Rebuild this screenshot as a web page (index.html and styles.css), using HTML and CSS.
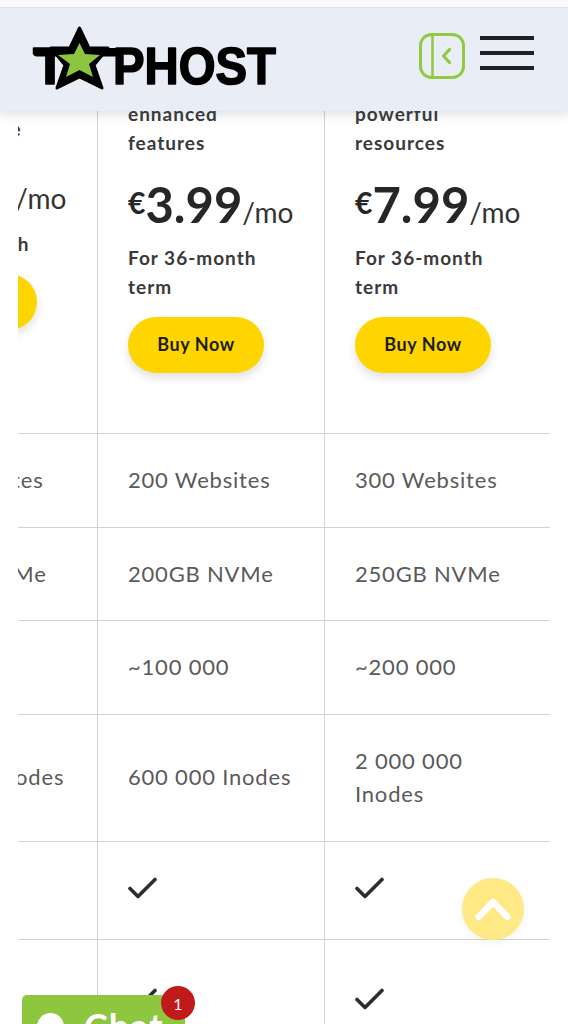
FILE: index.html
```html
<!DOCTYPE html>
<html lang="en">
<head>
<meta charset="utf-8">
<title>TopHost plans</title>
<link rel="stylesheet" href="styles.css">
</head>
<body>
<header class="topbar">
  <div class="bar">
    <svg class="logo" viewBox="0 0 250 70" width="250" height="70" aria-label="TopHost">
      <text class="logo-text" x="0" y="59" textLength="34" lengthAdjust="spacingAndGlyphs">T</text>
      <rect x="0" y="23" width="90" height="8.5" rx="4" fill="#000"/>
      <text class="logo-text" x="80" y="59" textLength="163" lengthAdjust="spacingAndGlyphs">PHOST</text>
      <path d="M46.5 3 L56 23 L75 23 L61 40 L69 63 L46.5 52 L24 63 L32 40 L18 23 L37 23 Z" fill="#000" stroke="#000" stroke-width="3" stroke-linejoin="round"/>
      <path d="M46.5 18 L52 29 L67 30 L56 39 L60 52 L46.5 45 L33 52 L37 39 L25 30 L41 29 Z" fill="#8cc63f"/>
    </svg>
    <div class="bar-actions">
      <svg class="panel-icon" viewBox="0 0 46 46" width="46" height="46" aria-hidden="true">
        <rect x="1.5" y="1.5" width="43" height="43" rx="11" fill="none" stroke="#93c940" stroke-width="3"/>
        <path d="M13.5 2 V44" stroke="#93c940" stroke-width="2.6"/>
        <path d="M30.5 16.5 L24.5 23 L30.5 29.5" fill="none" stroke="#93c940" stroke-width="3.2" stroke-linecap="round" stroke-linejoin="round"/>
      </svg>
      <div class="burger"><span></span><span></span><span></span></div>
    </div>
  </div>
</header>

<main class="plans">
  <table class="plan-table">
    <tr class="head-row">
      <td>
        <p class="blurb">Starter plan<br>small service</p>
        <div class="price"><span class="cur">€</span>1.99<span class="per">/mo</span></div>
        <p class="term">For 36-month</p>
        <a class="buy">Buy Now</a>
      </td>
      <td>
        <p class="blurb">Business plan<br>with more<br>enhanced<br>features</p>
        <div class="price"><span class="cur">€</span>3.99<span class="per">/mo</span></div>
        <p class="term">For 36-month<br>term</p>
        <a class="buy">Buy Now</a>
      </td>
      <td>
        <p class="blurb">Premium plan<br>with most<br>powerful<br>resources</p>
        <div class="price"><span class="cur">€</span>7.99<span class="per">/mo</span></div>
        <p class="term">For 36-month<br>term</p>
        <a class="buy">Buy Now</a>
      </td>
    </tr>
    <tr><td>100 Websites</td><td>200 Websites</td><td>300 Websites</td></tr>
    <tr><td>100GB NVMe</td><td>200GB NVMe</td><td>250GB NVMe</td></tr>
    <tr><td>~50 000</td><td>~100 000</td><td>~200 000</td></tr>
    <tr><td>300 000 Inodes</td><td>600 000 Inodes</td><td>2 000 000<br>Inodes</td></tr>
    <tr class="check-row">
      <td><svg class="check" viewBox="0 0 30 24" width="30" height="24"><path d="M2 12.5 L10 20.5 L27 3.5"/></svg></td>
      <td><svg class="check" viewBox="0 0 30 24" width="30" height="24"><path d="M2 12.5 L10 20.5 L27 3.5"/></svg></td>
      <td><svg class="check" viewBox="0 0 30 24" width="30" height="24"><path d="M2 12.5 L10 20.5 L27 3.5"/></svg></td>
    </tr>
    <tr class="check-row check-row-tall">
      <td><svg class="check" viewBox="0 0 30 24" width="30" height="24"><path d="M2 12.5 L10 20.5 L27 3.5"/></svg></td>
      <td><svg class="check" viewBox="0 0 30 24" width="30" height="24"><path d="M2 12.5 L10 20.5 L27 3.5"/></svg></td>
      <td><svg class="check" viewBox="0 0 30 24" width="30" height="24"><path d="M2 12.5 L10 20.5 L27 3.5"/></svg></td>
    </tr>
  </table>
</main>

<a class="to-top" aria-label="Back to top">
  <svg viewBox="0 0 36 24" width="36" height="24"><path d="M3.5 20 L18 5 L32.5 20"/></svg>
</a>

<div class="chat">
  <div class="chat-body">
    <span class="chat-dot"></span>
    <span class="chat-label">Chat</span>
  </div>
  <span class="chat-badge">1</span>
</div>
</body>
</html>
```
FILE: styles.css
```css
* { box-sizing: border-box; }
html, body { margin: 0; height: 100%; overflow: hidden; background: #fff; }
body { font-family: "Lato", "Noto Sans", sans-serif; color: #2b2b2b; }

.topbar {
  position: fixed; top: 0; left: 0; right: 0; z-index: 5;
  background: #fafafd; padding-top: 7px;
  box-shadow: 0 3px 10px rgba(60, 70, 90, .18);
}
.bar {
  height: 104px; background: #e9edf5; border-top: 1px solid #dfe1e6;
  display: flex; align-items: center; justify-content: space-between;
  padding: 0 34px 0 33px;
}
.logo { display: block; overflow: visible; }
.logo-text { font-family: "Liberation Sans", sans-serif; font-weight: 700; font-size: 51px; fill: #000; stroke: #000; stroke-width: 1.6; stroke-linejoin: round; }
.bar-actions { display: flex; align-items: center; gap: 15px; margin-top: -7px; }
.panel-icon { display: block; }
.burger { width: 54px; display: flex; flex-direction: column; gap: 11px; margin-bottom: 6px; }
.burger span { display: block; height: 4px; background: #1f2024; }

.plans { margin: 41px 18px 0; overflow: hidden; height: calc(100vh - 41px); }
.plan-table {
  border-collapse: separate; border-spacing: 0; table-layout: fixed;
  width: 681px; margin-left: -147px;
}
.plan-table td {
  width: 227px; padding: 29px 14px 30px 30px; vertical-align: middle;
  font-size: 22px; line-height: 33.5px; color: #5a5a5a; letter-spacing: .8px;
  border-right: 1px solid #d2d2d2; border-bottom: 1px solid #d2d2d2;
}
.plan-table td:last-child { border-right: 0; }
.plan-table .head-row td { padding: 0 14px 60px 30px; }
.blurb, .term { margin: 0; font-size: 19px; line-height: 29px; font-weight: 700; color: #3a3a3a; letter-spacing: 1px; }
.price { margin: 18px 0 2px; font-size: 49px; line-height: 58px; font-weight: 700; color: #262626; letter-spacing: 0; white-space: nowrap; }
.cur { font-size: 30px; vertical-align: 9px; line-height: 0; }
.per { font-size: 28px; font-weight: 400; letter-spacing: .2px; color: #333; }
.buy {
  display: flex; align-items: center; justify-content: center;
  width: 136px; height: 56px; margin-top: 16px; border-radius: 28px;
  background: #ffd500; color: #1d1d1d; font-size: 18px; font-weight: 700; letter-spacing: .6px;
  box-shadow: 0 5px 10px rgba(0, 0, 0, .12);
}
.plan-table .check-row td { height: 98px; padding: 0 14px 4px 30px; }
.plan-table .check-row-tall td { height: 120px; padding: 0 14px 0 30px; }
.check { display: block; fill: none; stroke: #2c2c2c; stroke-width: 3.6; stroke-linecap: round; stroke-linejoin: round; }

.to-top {
  position: fixed; left: 462px; top: 878px; width: 62px; height: 62px; border-radius: 50%;
  background: #ffe985; display: flex; align-items: center; justify-content: center; z-index: 4;
  box-shadow: 0 2px 8px rgba(0, 0, 0, .06);
}
.to-top svg { fill: none; stroke: #fff; stroke-width: 6.5; stroke-linecap: round; stroke-linejoin: round; display: block; }

.chat {
  position: fixed; left: 22px; top: 995px; width: 163px; height: 29px; z-index: 6;
  background: #8dc63f; border-radius: 5px 5px 0 0;
}
.chat-body {
  height: 29px; overflow: hidden;
  display: flex; align-items: flex-start; gap: 20px; padding: 18px 0 0 15px;
}
.chat-dot { width: 27px; height: 27px; border-radius: 50%; background: #fff; flex: none; }
.chat-label { color: #fff; font-size: 36px; font-weight: 700; line-height: 27px; letter-spacing: 1px; }
.chat-badge {
  position: absolute; right: -10px; top: -9px; width: 34px; height: 34px; border-radius: 50%;
  background: #c11a1a; color: #fff; font-size: 16px; display: flex; align-items: center; justify-content: center;
}
```
